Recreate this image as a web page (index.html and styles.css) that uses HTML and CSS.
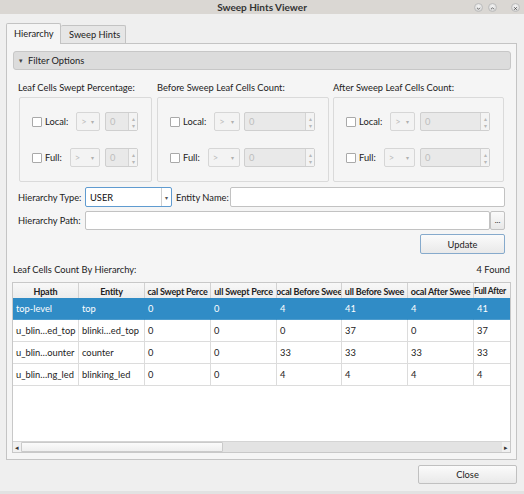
FILE: index.html
```html
<!DOCTYPE html>
<html>
<head>
<meta charset="utf-8">
<title>Sweep Hints Viewer</title>
<link rel="stylesheet" href="styles.css">
</head>
<body>
<div class="window">
  <div class="titlebar">
    <div></div>
    <div class="title">Sweep Hints Viewer</div>
    <div class="controls">
      <span class="wbtn"><svg width="9" height="9" viewBox="0 0 9 9"><path d="M2.6 3.6 L4.5 5.5 L6.4 3.6" fill="none" stroke="#555" stroke-width="1.1"/></svg></span>
      <span class="wbtn"><svg width="9" height="9" viewBox="0 0 9 9"><path d="M2.6 5.4 L4.5 3.5 L6.4 5.4" fill="none" stroke="#555" stroke-width="1.1"/></svg></span>
      <span class="wbtn wclose"><svg width="9" height="9" viewBox="0 0 9 9"><path d="M3 3 L6 6 M6 3 L3 6" fill="none" stroke="#444" stroke-width="1.2"/></svg></span>
    </div>
  </div>

  <div class="main">
    <div class="tabs">
      <div class="tab active">Hierarchy</div>
      <div class="tab">Sweep Hints</div>
    </div>

    <div class="pane">
      <div class="filter-head"><span class="tri">&#9662;</span>Filter Options</div>

      <div class="filters">
        <div class="groups">
          <div class="group g1">
            <div class="glabel">Leaf Cells Swept Percentage:</div>
            <div class="gbox">
              <div class="frow">
                <span class="cb"></span><span class="flabel">Local:</span>
                <span class="combo dis"><span class="cv">&gt;</span><span class="carr">&#9662;</span></span>
                <span class="spin"><span class="sv">0</span><span class="sarr"><i>&#9652;</i><i>&#9662;</i></span></span>
              </div>
              <div class="frow">
                <span class="cb"></span><span class="flabel">Full:</span>
                <span class="combo dis"><span class="cv">&gt;</span><span class="carr">&#9662;</span></span>
                <span class="spin"><span class="sv">0</span><span class="sarr"><i>&#9652;</i><i>&#9662;</i></span></span>
              </div>
            </div>
          </div>
          <div class="group g2">
            <div class="glabel">Before Sweep Leaf Cells Count:</div>
            <div class="gbox">
              <div class="frow">
                <span class="cb"></span><span class="flabel">Local:</span>
                <span class="combo dis"><span class="cv">&gt;</span><span class="carr">&#9662;</span></span>
                <span class="spin"><span class="sv">0</span><span class="sarr"><i>&#9652;</i><i>&#9662;</i></span></span>
              </div>
              <div class="frow">
                <span class="cb"></span><span class="flabel">Full:</span>
                <span class="combo dis"><span class="cv">&gt;</span><span class="carr">&#9662;</span></span>
                <span class="spin"><span class="sv">0</span><span class="sarr"><i>&#9652;</i><i>&#9662;</i></span></span>
              </div>
            </div>
          </div>
          <div class="group g3">
            <div class="glabel">After Sweep Leaf Cells Count:</div>
            <div class="gbox">
              <div class="frow">
                <span class="cb"></span><span class="flabel">Local:</span>
                <span class="combo dis"><span class="cv">&gt;</span><span class="carr">&#9662;</span></span>
                <span class="spin"><span class="sv">0</span><span class="sarr"><i>&#9652;</i><i>&#9662;</i></span></span>
              </div>
              <div class="frow">
                <span class="cb"></span><span class="flabel">Full:</span>
                <span class="combo dis"><span class="cv">&gt;</span><span class="carr">&#9662;</span></span>
                <span class="spin"><span class="sv">0</span><span class="sarr"><i>&#9652;</i><i>&#9662;</i></span></span>
              </div>
            </div>
          </div>
        </div>

        <div class="row r1">
          <span class="rlabel">Hierarchy Type:</span>
          <span class="combo focus"><span class="cv">USER</span><span class="carr">&#9662;</span></span>
          <span class="rlabel2">Entity Name:</span>
          <span class="input grow"></span>
        </div>
        <div class="row r2">
          <span class="rlabel">Hierarchy Path:</span>
          <span class="input grow"></span>
          <span class="dots">...</span>
        </div>
        <div class="row r3">
          <span class="btn update">Update</span>
        </div>
      </div>

      <div class="status">
        <span>Leaf Cells Count By Hierarchy:</span>
        <span>4 Found</span>
      </div>

      <div class="table">
        <div class="thead">
          <div class="th">Hpath</div>
          <div class="th">Entity</div>
          <div class="th">cal Swept Perce</div>
          <div class="th">ull Swept Perce</div>
          <div class="th">ocal Before Swee</div>
          <div class="th">ull Before Swee</div>
          <div class="th">ocal After Swee</div>
          <div class="th last">Full After</div>
        </div>
        <div class="tr sel">
          <div class="td">top-level</div><div class="td">top</div><div class="td">0</div><div class="td">0</div><div class="td">4</div><div class="td">41</div><div class="td">4</div><div class="td last">41</div>
        </div>
        <div class="tr">
          <div class="td">u_blin…ed_top</div><div class="td">blinki…ed_top</div><div class="td">0</div><div class="td">0</div><div class="td">0</div><div class="td">37</div><div class="td">0</div><div class="td last">37</div>
        </div>
        <div class="tr">
          <div class="td">u_blin…ounter</div><div class="td">counter</div><div class="td">0</div><div class="td">0</div><div class="td">33</div><div class="td">33</div><div class="td">33</div><div class="td last">33</div>
        </div>
        <div class="tr">
          <div class="td">u_blin…ng_led</div><div class="td">blinking_led</div><div class="td">0</div><div class="td">0</div><div class="td">4</div><div class="td">4</div><div class="td">4</div><div class="td last">4</div>
        </div>
        <div class="tempty"></div>
        <div class="hscroll">
          <span class="sbtn">&#9666;</span>
          <span class="handle"></span>
          <span class="track"></span>
          <span class="sbtn">&#9656;</span>
        </div>
      </div>
    </div>

    <div class="footer">
      <span class="btn close">Close</span>
    </div>
  </div>
</div>
</body>
</html>
```

FILE: styles.css
```css
* { box-sizing: border-box; margin: 0; padding: 0; }
html, body { width: 524px; height: 494px; overflow: hidden; }
body {
  background: #efefef;
  font-family: Lato, "Noto Sans", sans-serif;
  font-size: 9.3px;
  color: #222;
}
.window { height: 494px; display: flex; flex-direction: column; border-bottom: 3px solid #e2e2e2; }

/* title bar */
.titlebar {
  height: 14px;
  background: #dad7d3;
  display: grid;
  grid-template-columns: 1fr auto 1fr;
  align-items: center;
}
.title { font-weight: bold; font-size: 10px; color: #333; white-space: nowrap; }
.controls { display: flex; justify-content: flex-end; align-items: center; padding-right: 4px; }
.wbtn {
  width: 9px; height: 9px; border-radius: 50%;
  background: radial-gradient(circle at 50% 35%, #f4f4f4, #cfcfcf);
  border: 0.5px solid #bdbdbd;
  display: flex;
}
.wbtn + .wbtn { margin-left: 5px; }
.wbtn.wclose { margin-left: 14px; }

/* main */
.main { flex: 1; display: flex; flex-direction: column; padding: 9px 7px 0 6px; }
.tabs { display: flex; align-items: flex-end; height: 20px; }
.tab {
  height: 18px; line-height: 17px; white-space: nowrap;
  border: 1px solid #c3c3c3; border-bottom: none;
  border-radius: 2px 2px 0 0;
  background: #e6e6e6;
}
.tab.active {
  height: 21px; margin-bottom: -1px; background: #f5f5f5; width: 55px; padding-left: 7px;
  line-height: 20px; position: relative; z-index: 1;
}
.tab:not(.active) { width: 65px; border-left: none; padding-left: 8px; }

.pane {
  height: 417px;
  border: 1px solid #c4c4c4;
  background: #f5f5f5;
  padding: 7px 5px 6px 6px;
  display: flex; flex-direction: column;
}
.filter-head {
  height: 19px;
  background: #dcdcdc;
  border: 1px solid #c7c7c7;
  border-radius: 3px;
  display: flex; align-items: center;
  padding-left: 5px;
}
.tri { font-size: 7px; margin-right: 5px; color: #444; }

.filters { margin: 0 6px 0 5px; display: flex; flex-direction: column; }
.groups { display: flex; margin-top: 11px; }
.group { display: flex; flex-direction: column; }
.g1 { width: 134px; }
.g2 { width: 172px; margin-left: 5px; }
.g3 { width: 171px; margin-left: 4px; }
.glabel { height: 14px; line-height: 14px; white-space: nowrap; }
.g1 .gbox { margin-left: 1px; }
.gbox {
  margin-top: 2px;
  height: 85px;
  border: 1px solid #dadada;
  border-radius: 2px;
  padding: 14px 13px 14px 12px;
  display: flex; flex-direction: column; justify-content: space-between;
}
.frow { height: 19px; display: flex; align-items: center; white-space: nowrap; }
.cb {
  width: 10px; height: 10px; border: 1px solid #a9a9a9; background: #fff; border-radius: 1px;
  flex: none;
}
.flabel { margin-left: 3px; margin-right: 8px; }
.combo {
  height: 19px; flex: 1; min-width: 0;
  display: flex; align-items: center; justify-content: space-between;
  border: 1px solid #c4c4c4; border-radius: 2px;
  background: #fff;
  padding: 0 5px 0 4px;
}
.combo.dis { background: #f3f3f3; border-color: #d6d6d6; color: #bcbcbc; }
.carr { font-size: 6px; color: #b0b0b0; }
.spin {
  height: 19px; margin-left: 5px; flex: none;
  border: 1px solid #cfcfcf; border-radius: 2px;
  background: #e9e9e9; color: #bdbdbd;
  display: flex; align-items: center; justify-content: space-between;
  padding-left: 4px;
}
.g1 .spin { width: 33px; }
.g2 .spin { width: 71px; margin-left: 4px; }
.g3 .spin { width: 70px; }
.sarr {
  width: 9px; height: 17px; border-left: 1px solid #d4d4d4; background: #f3f3f3;
  display: flex; flex-direction: column; align-items: center; justify-content: center;
}
.sarr i { font-style: normal; font-size: 6px; line-height: 7px; color: #b8b8b8; }

.row { display: flex; align-items: center; white-space: nowrap; }
.r1 { margin-top: 5px; height: 20px; }
.r2 { margin-top: 4px; height: 19px; }
.r3 { margin-top: 4px; height: 20px; justify-content: flex-end; }
.rlabel { width: 67px; flex: none; }
.rlabel2 { margin-left: 4px; margin-right: 0; width: 54px; flex: none; }
.r1 .combo { flex: none; width: 87px; height: 20px; color: #111; padding-right: 0; }
.combo.focus { border-color: #5f9bd0; }
.combo.focus .carr {
  width: 10px; height: 18px; border-left: 1px solid #cfcfcf;
  display: flex; align-items: center; justify-content: center; color: #555;
}
.input {
  height: 19px; background: #fff; border: 1px solid #c2c2c2; border-radius: 2px;
}
.r1 .input { height: 20px; }
.grow { flex: 1; }
.dots {
  width: 15px; height: 19px; flex: none;
  border: 1px solid #c2c2c2; border-radius: 2px;
  background: linear-gradient(#fafafa, #e8e8e8);
  font-size: 8px; display: flex; align-items: center; justify-content: center; padding-bottom: 2px;
}
.btn {
  display: flex; align-items: center; justify-content: center;
  border-radius: 2px;
  background: linear-gradient(#fbfbfb, #e9e9e9);
}
.update { width: 85px; height: 20px; border: 1px solid #86aacc; }

.status {
  margin-top: 9px; height: 14px; line-height: 14px;
  display: flex; justify-content: space-between;
  padding-right: 1px;
}

.table {
  margin-top: 5px; margin-left: -1px;
  height: 171px;
  border: 1px solid #c8c8c8;
  background: #fff;
  display: flex; flex-direction: column;
  overflow: hidden;
}
.thead, .tr {
  display: grid;
  grid-template-columns: 66px 66px 66px 66px 65px 66px 66px 36px;
}
.thead { height: 16px; background: linear-gradient(#f8f8f8, #ececec); margin-bottom: -1px; }
.th {
  font-weight: bold; white-space: nowrap; overflow: hidden;
  display: flex; justify-content: center; align-items: center;
  border-right: 1px solid #d2d2d2;
  line-height: 15px;
  letter-spacing: -0.2px;
  font-size: 9px;
}
.th.last, .td.last { border-right: none; justify-content: flex-start; }
.th.last { font-size: 8.5px; letter-spacing: -0.3px; }
.tr { height: 22px; }
.td {
  white-space: nowrap; overflow: hidden;
  display: flex; align-items: center;
  padding-left: 3px;
  border-right: 1px solid #dcdcdc;
  border-bottom: 1px solid #dcdcdc;
}
.tr.sel { background: #308cc6; color: #fff; }
.tr.sel .td { border-color: #308cc6; border-bottom-color: #4e9ccd; }
.tempty { height: 55px; }
.hscroll {
  height: 11px; display: flex; background: #e3e3e3; border-top: 1px solid #d4d4d4;
}
.sbtn { width: 8px; font-size: 7px; line-height: 10px; text-align: center; color: #333; background: #f0f0f0; flex: none; }
.handle { width: 202px; background: linear-gradient(#fbfbfb, #efefef); border: 1px solid #cacaca; border-radius: 1px; flex: none; }
.track { flex: 1; }

.footer { display: flex; justify-content: flex-end; margin-top: 5px; }
.close { width: 99px; height: 19px; border: 1px solid #c0c0c0; }
```
